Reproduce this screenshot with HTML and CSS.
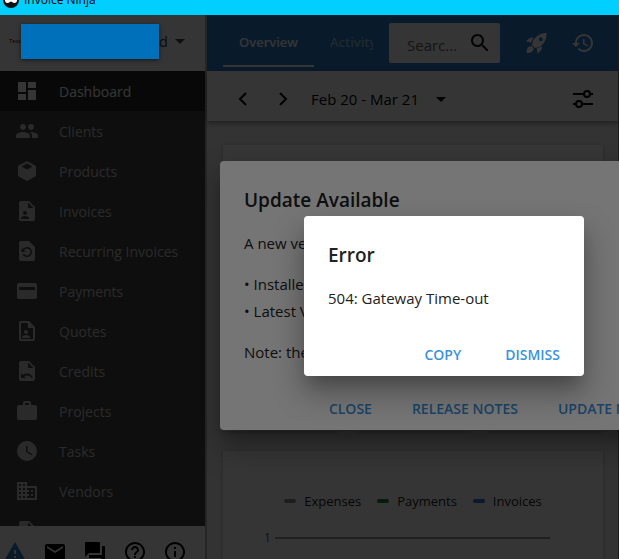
FILE: index.html
```
<!DOCTYPE html>
<html lang="en">
<head>
    <meta charset="utf-8">
    <meta name="viewport" content="width=device-width, initial-scale=1">
    <title>Invoice Ninja</title>
    <link rel="stylesheet" href="styles.css">
</head>
<body>
    <div class="titlebar">
        <svg class="titlebar__icon" viewBox="0 0 16 16"><circle cx="8" cy="8" r="8" fill="#111"/><path d="M2 6q6-3 12 0v3q-1 3-4 1.500l-2-1-2 1Q3 12 2 9z" fill="#fff"/></svg>
        <span class="titlebar__text">Invoice Ninja</span>
    </div>

    <div class="app">
        <aside class="sidebar">
            <div class="company">
                <span class="company__logo">Test</span>
                <span class="company__cover"></span>
                <button class="company__button" type="button">d
                    <svg class="icon" viewBox="0 0 24 24"><path d="M7 10l5 5 5-5z"/></svg>
                </button>
            </div>

            <nav class="menu">
                <a class="menu__item menu__item--active" href="#dashboard">
                    <svg class="icon" viewBox="0 0 24 24"><path d="M3 13h8V3H3v10zm0 8h8v-6H3v6zm10 0h8V11h-8v10zm0-18v6h8V3h-8z"/></svg>
                    Dashboard
                </a>
                <a class="menu__item" href="#clients">
                    <svg class="icon" viewBox="0 0 24 24"><path d="M16 11c1.660 0 2.990-1.340 2.990-3S17.660 5 16 5c-1.660 0-3 1.340-3 3s1.340 3 3 3zm-8 0c1.660 0 2.990-1.340 2.990-3S9.660 5 8 5C6.340 5 5 6.340 5 8s1.340 3 3 3zm0 2c-2.330 0-7 1.170-7 3.500V19h14v-2.500c0-2.330-4.670-3.500-7-3.500zm8 0c-.29 0-.62.02-.97.05 1.160.84 1.970 1.970 1.970 3.450V19h6v-2.500c0-2.330-4.670-3.500-7-3.500z"/></svg>
                    Clients
                </a>
                <a class="menu__item" href="#products">
                    <svg class="icon" viewBox="0 0 24 24"><path fill-rule="evenodd" d="M12 2l9 5v10l-9 5-9-5V7zM12 4.600L6.500 7.600 12 10.600l5.500-3z"/></svg>
                    Products
                </a>
                <a class="menu__item" href="#invoices">
                    <svg class="icon" viewBox="0 0 24 24"><path fill-rule="evenodd" d="M6 2h8l6 6v12a2 2 0 0 1-2 2H6a2 2 0 0 1-2-2V4a2 2 0 0 1 2-2zM13 3.500V9h5.500zM10 12a2 2 0 1 0 0 4 2 2 0 0 0 0-4zM6 20h8v-1c0-1.300-2.600-2-4-2s-4 .7-4 2z"/></svg>
                    Invoices
                </a>
                <a class="menu__item" href="#recurring">
                    <svg class="icon" viewBox="0 0 24 24"><path d="M14 2H6c-1.100 0-1.990.9-1.990 2L4 20c0 1.100.89 2 1.990 2H18c1.100 0 2-.9 2-2V8l-6-6zm-2 16c-2.050 0-3.810-1.240-4.580-3h1.710c.63.9 1.680 1.500 2.870 1.500 1.930 0 3.500-1.570 3.500-3.500S13.930 9.500 12 9.500c-1.350 0-2.520.78-3.100 1.900l1.600 1.600h-4V9l1.300 1.300C8.690 8.920 10.230 8 12 8c2.760 0 5 2.240 5 5s-2.240 5-5 5z"/></svg>
                    Recurring Invoices
                </a>
                <a class="menu__item" href="#payments">
                    <svg class="icon" viewBox="0 0 24 24"><path fill-rule="evenodd" d="M4 4h16a2 2 0 0 1 2 2v12a2 2 0 0 1-2 2H4a2 2 0 0 1-2-2V6a2 2 0 0 1 2-2zM4 8v3h16V8z"/></svg>
                    Payments
                </a>
                <a class="menu__item" href="#quotes">
                    <svg class="icon" viewBox="0 0 24 24"><path fill-rule="evenodd" d="M6 2h8l6 6v12a2 2 0 0 1-2 2H6a2 2 0 0 1-2-2V4a2 2 0 0 1 2-2zM6 4v16h12V9h-5V4z"/><circle cx="11" cy="13" r="2"/><path d="M7 19v-1c0-1.300 2.600-2 4-2s4 .7 4 2v1z"/></svg>
                    Quotes
                </a>
                <a class="menu__item" href="#credits">
                    <svg class="icon" viewBox="0 0 24 24"><path fill-rule="evenodd" d="M6 2h8l6 6v12a2 2 0 0 1-2 2H6a2 2 0 0 1-2-2V4a2 2 0 0 1 2-2zM13 3.500V9h5.500zM6 14v5h5l-1.800-1.800c3-1.600 6-.6 7.400 1.800l1.400-.6c-2-4-6.500-5.200-10.100-2.500z"/></svg>
                    Credits
                </a>
                <a class="menu__item" href="#projects">
                    <svg class="icon" viewBox="0 0 24 24"><path d="M20 6h-4V4c0-1.110-.89-2-2-2h-4c-1.110 0-2 .89-2 2v2H4c-1.110 0-1.990.89-1.990 2L2 19c0 1.110.89 2 2 2h16c1.110 0 2-.89 2-2V8c0-1.110-.89-2-2-2zm-6 0h-4V4h4v2z"/></svg>
                    Projects
                </a>
                <a class="menu__item" href="#tasks">
                    <svg class="icon" viewBox="0 0 24 24"><path fill-rule="evenodd" d="M12 2a10 10 0 1 0 0 20 10 10 0 0 0 0-20zM11 7h1.500v5.200l4.700 2.800-.8 1.200L11 13z"/></svg>
                    Tasks
                </a>
                <a class="menu__item" href="#vendors">
                    <svg class="icon" viewBox="0 0 24 24"><path d="M12 7V3H2v18h20V7H12zM6 19H4v-2h2v2zm0-4H4v-2h2v2zm0-4H4V9h2v2zm0-4H4V5h2v2zm4 12H8v-2h2v2zm0-4H8v-2h2v2zm0-4H8V9h2v2zm0-4H8V5h2v2zm10 12h-8v-2h2v-2h-2v-2h2v-2h-2V9h8v10zm-2-8h-2v2h2v-2zm0 4h-2v2h2v-2z"/></svg>
                    Vendors
                </a>
                <a class="menu__item" href="#expenses" aria-label="Expenses">
                    <svg class="icon" viewBox="0 0 24 24"><path fill-rule="evenodd" d="M6 2h8l6 6v12a2 2 0 0 1-2 2H6a2 2 0 0 1-2-2V4a2 2 0 0 1 2-2zM13 3.500V9h5.500z"/></svg>
                </a>
            </nav>

            <div class="shortcuts">
                <button class="shortcuts__button shortcuts__button--warning" type="button" aria-label="Warning">
                    <svg class="icon" viewBox="0 0 24 24"><path d="M1 21h22L12 2 1 21zm12-3h-2v-2h2v2zm0-4h-2v-4h2v4z"/></svg>
                </button>
                <button class="shortcuts__button" type="button" aria-label="Contact us">
                    <svg class="icon" viewBox="0 0 24 24"><path d="M20 4H4c-1.100 0-1.990.9-1.990 2L2 18c0 1.100.9 2 2 2h16c1.100 0 2-.9 2-2V6c0-1.100-.9-2-2-2zm0 4l-8 5-8-5V6l8 5 8-5v2z"/></svg>
                </button>
                <button class="shortcuts__button" type="button" aria-label="Forum">
                    <svg class="icon" viewBox="0 0 24 24"><path d="M21 6h-2v9H6v2c0 .55.45 1 1 1h11l4 4V7c0-.55-.45-1-1-1zm-4 6V3c0-.55-.45-1-1-1H3c-.55 0-1 .45-1 1v14l4-4h10c.55 0 1-.45 1-1z"/></svg>
                </button>
                <button class="shortcuts__button" type="button" aria-label="Help">
                    <svg class="icon" viewBox="0 0 24 24"><path d="M11 18h2v-2h-2v2zm1-16C6.480 2 2 6.480 2 12s4.480 10 10 10 10-4.480 10-10S17.520 2 12 2zm0 18c-4.410 0-8-3.590-8-8s3.590-8 8-8 8 3.590 8 8-3.590 8-8 8zm0-14c-2.210 0-4 1.790-4 4h2c0-1.100.9-2 2-2s2 .9 2 2c0 2-3 1.750-3 5h2c0-2.250 3-2.500 3-5 0-2.210-1.790-4-4-4z"/></svg>
                </button>
                <button class="shortcuts__button" type="button" aria-label="About">
                    <svg class="icon" viewBox="0 0 24 24"><path d="M11 7h2v2h-2zm0 4h2v6h-2zm1-9C6.480 2 2 6.480 2 12s4.480 10 10 10 10-4.480 10-10S17.520 2 12 2zm0 18c-4.410 0-8-3.590-8-8s3.590-8 8-8 8 3.590 8 8-3.590 8-8 8z"/></svg>
                </button>
            </div>
        </aside>

        <main class="main-content">
            <header class="appbar">
                <div class="tabs">
                    <button class="tabs__tab tabs__tab--active" type="button">Overview</button>
                    <button class="tabs__tab" type="button">Activity</button>
                </div>
                <div class="search">
                    <input class="search__field" type="text" placeholder="Searc..." aria-label="Search">
                    <svg class="icon" viewBox="0 0 24 24"><path d="M15.500 14h-.79l-.28-.27C15.410 12.590 16 11.110 16 9.500 16 5.910 13.090 3 9.500 3S3 5.910 3 9.500 5.910 16 9.500 16c1.610 0 3.090-.59 4.230-1.570l.27.28v.79l5 4.990L20.490 19l-4.990-5zm-6 0C7.010 14 5 11.990 5 9.500S7.010 5 9.500 5 14 7.010 14 9.500 11.990 14 9.500 14z"/></svg>
                </div>
                <div class="appbar__actions">
                    <button class="icon-button" type="button" aria-label="Upgrade">
                        <svg class="icon" viewBox="0 0 24 24"><path fill-rule="evenodd" d="M22.500 2C17 2 12.500 4.500 9 9.500L8 14l3 3 4.500-1C20.500 12.500 22.800 8 22.500 2zM16.800 6.200a2 2 0 1 0 0 4 2 2 0 0 0 0-4z"/><path d="M9.500 6.500C6 6.500 4 8 2 10.500l5 1zM18 15.500c.3 3-1 4.500-4.500 7l-.8-5zM8 15.300c-3.500-.7-5.500 1.700-5.500 6.700 5 0 7.500-1.700 6.800-5.300z"/></svg>
                    </button>
                    <button class="icon-button" type="button" aria-label="History">
                        <svg class="icon" viewBox="0 0 24 24"><path d="M13 3c-4.970 0-9 4.030-9 9H1l3.890 3.890.07.14L9 12H6c0-3.870 3.130-7 7-7s7 3.130 7 7-3.130 7-7 7c-1.930 0-3.680-.79-4.940-2.060l-1.420 1.420C8.270 19.990 10.510 21 13 21c4.970 0 9-4.030 9-9s-4.030-9-9-9zm-1 5v5l4.280 2.540.72-1.210-3.500-2.080V8H12z"/></svg>
                    </button>
                </div>
            </header>

            <div class="toolbar">
                <button class="icon-button" type="button" aria-label="Previous">
                    <svg class="icon icon--line" viewBox="0 0 24 24"><path d="M15 6l-6 6 6 6"/></svg>
                </button>
                <button class="icon-button" type="button" aria-label="Next">
                    <svg class="icon icon--line" viewBox="0 0 24 24"><path d="M9 6l6 6-6 6"/></svg>
                </button>
                <button class="toolbar__range" type="button">Feb 20 - Mar 21
                    <svg class="icon" viewBox="0 0 24 24"><path d="M7 10l5 5 5-5z"/></svg>
                </button>
                <button class="icon-button toolbar__settings" type="button" aria-label="Settings">
                    <svg class="icon icon--line" viewBox="0 0 24 24"><path d="M2 7h11M19 7h3M2 17h3M11 17h11"/><circle cx="16" cy="7" r="3"/><circle cx="8" cy="17" r="3"/></svg>
                </button>
            </div>

            <div class="content">
                <div class="card card--totals"></div>
                <div class="card-row">
                    <div class="card"></div>
                    <div class="card"></div>
                    <div class="card"></div>
                </div>
                <div class="card card--chart">
                    <ul class="legend">
                        <li class="legend__item legend__item--expenses">Expenses</li>
                        <li class="legend__item legend__item--payments">Payments</li>
                        <li class="legend__item legend__item--invoices">Invoices</li>
                    </ul>
                    <div class="axis">
                        <span class="axis__label">1</span>
                        <span class="axis__line"></span>
                    </div>
                </div>
            </div>
        </main>

        <div class="scrim"></div>
        <section class="dialog dialog--update" role="dialog" aria-labelledby="update-title">
            <h2 class="dialog__title" id="update-title">Update Available</h2>
            <div class="dialog__body">
                <p>A new version</p>
                <ul class="versions">
                    <li>Installed</li>
                    <li>Latest Version</li>
                </ul>
                <p>Note: the app will reload</p>
            </div>
            <div class="dialog__actions">
                <button class="dialog__button" type="button">CLOSE</button>
                <button class="dialog__button" type="button">RELEASE NOTES</button>
                <button class="dialog__button" type="button">UPDATE NOW</button>
            </div>
        </section>

        <div class="scrim"></div>
        <section class="dialog dialog--error" role="alertdialog" aria-labelledby="error-title">
            <h2 class="dialog__title" id="error-title">Error</h2>
            <p class="dialog__body">504: Gateway Time-out</p>
            <div class="dialog__actions">
                <button class="dialog__button" type="button">COPY</button>
                <button class="dialog__button" type="button">DISMISS</button>
            </div>
        </section>
    </div>
</body>
</html>
```
FILE: styles.css
```
* {
    box-sizing: border-box;
}

body {
    display: flex;
    flex-direction: column;
    height: 100vh;
    margin: 0;
    overflow: hidden;
    font-family: "Open Sans", "Noto Sans", sans-serif;
    font-size: 15px;
    color: #222;
}

button,
input {
    padding: 0;
    border: 0;
    background: none;
    font: inherit;
    color: inherit;
}

p,
ul,
h2 {
    margin: 0;
    padding: 0;
    list-style: none;
}

.icon {
    flex: none;
    display: block;
    width: 24px;
    height: 24px;
    fill: currentColor;
}

.icon--line {
    fill: none;
    stroke: currentColor;
    stroke-width: 2;
}

.icon-button {
    display: flex;
    align-items: center;
    justify-content: center;
    width: 40px;
    height: 40px;
}

/* window title, cut by the top edge */
.titlebar {
    flex: none;
    display: flex;
    align-items: flex-end;
    gap: 5px;
    height: 15px;
    padding: 0 3px 7px;
    overflow: hidden;
    background: #00cfff;
    font-size: 12px;
    line-height: 16px;
    color: #000;
}

.titlebar__icon {
    flex: none;
    width: 16px;
    height: 16px;
}

.app {
    position: relative;
    flex: 1;
    display: flex;
    min-height: 0;
    overflow: hidden;
}

/* sidebar */
.sidebar {
    flex: none;
    display: flex;
    flex-direction: column;
    width: 207px;
    border-right: 2px solid #b5b5b5;
    background: #474747;
}

.company {
    flex: none;
    display: flex;
    align-items: center;
    height: 56px;
    padding: 0 13px 4px 9px;
    background: #fff;
    color: #444;
}

.company__logo {
    width: 12px;
    font-size: 6px;
    color: #000;
}

.company__cover {
    z-index: 2;
    flex: 1;
    height: 35px;
    background: #0070ba;
    box-shadow: 0 1px 4px rgba(0, 0, 0, .6);
}

.company__button {
    display: flex;
    align-items: center;
    font-size: 15px;
}

.menu {
    flex: 1;
    min-height: 0;
    overflow: hidden;
}

.menu__item {
    display: flex;
    align-items: center;
    gap: 20px;
    height: 40px;
    padding: 0 15px;
    font-size: 14px;
    color: #c8c8c8;
    text-decoration: none;
}

.menu__item--active {
    background: #2a2a2a;
    color: #fff;
}

.shortcuts {
    flex: none;
    display: flex;
    gap: 16px;
    height: 33px;
    padding: 14px 3px 0;
    overflow: hidden;
    background: #fff;
    color: #000;
}

.shortcuts__button {
    height: 24px;
}

.shortcuts__button--warning {
    color: #2f80cb;
}

/* main area */
.main-content {
    flex: 1;
    display: flex;
    flex-direction: column;
    min-width: 0;
    border-right: 1px solid #888;
    background: #f2f2f5;
}

.appbar {
    flex: none;
    display: flex;
    align-items: center;
    height: 56px;
    padding: 0 15px 0 16px;
    background: #2f80cb;
    color: #fff;
}

.tabs {
    flex: 1;
    display: flex;
    align-self: stretch;
    min-width: 0;
    margin-right: 16px;
    padding-bottom: 4px;
    overflow: hidden;
}

.tabs__tab {
    flex: none;
    padding: 4px 16px 0;
    border-bottom: 2px solid transparent;
    font-size: 13px;
    font-weight: 600;
    color: #9fbfe0;
}

.tabs__tab--active {
    border-bottom-color: #fff;
    color: #fff;
}

.search {
    display: flex;
    align-items: center;
    width: 111px;
    height: 40px;
    margin-right: 16px;
    padding: 0 8px 0 18px;
    border-radius: 2px;
    background: #fff;
    color: #111;
}

.search__field {
    flex: 1;
    min-width: 0;
    padding-top: 4px;
}

.search__field::placeholder {
    color: #666;
    opacity: 1;
}

.appbar__actions {
    display: flex;
    gap: 7px;
}

.toolbar {
    z-index: 1;
    flex: none;
    display: flex;
    align-items: center;
    height: 50px;
    padding: 6px 15px 0 16px;
    background: #fff;
    box-shadow: 0 2px 5px rgba(0, 0, 0, .4);
    color: #000;
}

.toolbar__range {
    display: flex;
    align-items: center;
    gap: 10px;
    margin-left: 8px;
}

.toolbar__settings {
    margin-left: auto;
}

.content {
    flex: 1;
    display: flex;
    flex-direction: column;
    gap: 20px;
    min-height: 0;
    padding: 24px 15px 0 16px;
}

.card {
    background: #fff;
    box-shadow: 0 1px 4px rgba(0, 0, 0, .25);
}

.card--totals {
    flex: none;
    height: 146px;
}

.card-row {
    flex: none;
    display: grid;
    grid-template-columns: repeat(3, 1fr);
    gap: 16px;
    height: 120px;
}

.card--chart {
    flex: 1;
    min-height: 0;
    padding: 40px 53px 0 41px;
}

.legend {
    display: flex;
    justify-content: center;
    gap: 16px;
    padding-left: 12px;
    font-size: 13px;
    line-height: 20px;
}

.legend__item {
    display: flex;
    align-items: center;
    gap: 8px;
}

.legend__item::before {
    content: '';
    width: 12px;
    height: 4px;
    border-radius: 2px;
    background: #8f8f8f;
}

.legend__item--payments::before {
    background: #258030;
}

.legend__item--invoices::before {
    background: #2f80cb;
}

.axis {
    display: flex;
    align-items: center;
    gap: 4px;
    margin-top: 17px;
    font-size: 12px;
    line-height: 20px;
    color: #555;
}

.axis__line {
    flex: 1;
    height: 2px;
    background: #999;
}

/* dialogs */
.scrim {
    position: absolute;
    z-index: 1;
    inset: 0;
    background: rgba(0, 0, 0, .54);
}

.dialog {
    position: absolute;
    z-index: 1;
    border-radius: 4px;
    background: #fff;
    box-shadow: 0 11px 15px -7px rgba(0, 0, 0, .2), 0 16px 30px 2px rgba(0, 0, 0, .3);
}

.dialog--update {
    top: 146px;
    left: 220px;
    width: 455px;
}

.dialog--error {
    z-index: 3;
    top: 201px;
    left: 304px;
    width: 280px;
}

.dialog__title {
    padding: 24px 24px 0;
    font-size: 19px;
    font-weight: 600;
    line-height: 30px;
}

.dialog__body {
    padding: 15px 24px 24px;
    line-height: 27px;
}

.versions {
    padding: 14px 0;
}

.versions li::before {
    content: '• ';
}

.dialog__actions {
    display: flex;
    justify-content: flex-end;
    gap: 40px;
    padding: 5px 24px 9px;
}

.dialog--error .dialog__actions {
    gap: 44px;
}

.dialog__button {
    height: 26px;
    font-size: 14px;
    font-weight: 600;
    color: #3a93dd;
}
```
